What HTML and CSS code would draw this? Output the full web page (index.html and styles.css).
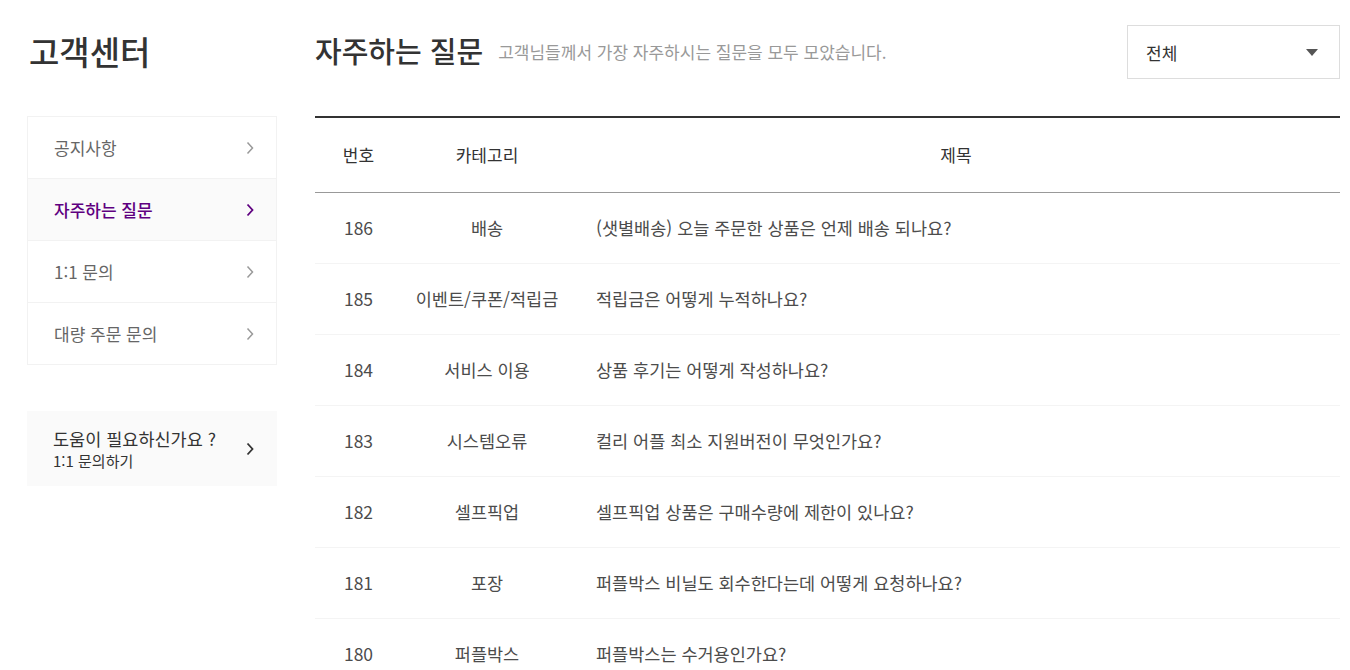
FILE: index.html
```html
<!DOCTYPE html>
<html lang="ko">
<head>
<meta charset="utf-8">
<title>자주하는 질문</title>
<link rel="stylesheet" href="styles.css">
</head>
<body>
<div class="page">
  <aside class="side">
    <h2 class="side-title">고객센터</h2>
    <ul class="menu">
      <li class="menu-item"><span>공지사항</span><svg class="chev" viewBox="0 0 8 14"><path d="M1.5 1.5 L6.5 7 L1.5 12.5"/></svg></li>
      <li class="menu-item active"><span>자주하는 질문</span><svg class="chev" viewBox="0 0 8 14"><path d="M1.5 1.5 L6.5 7 L1.5 12.5"/></svg></li>
      <li class="menu-item"><span>1:1 문의</span><svg class="chev" viewBox="0 0 8 14"><path d="M1.5 1.5 L6.5 7 L1.5 12.5"/></svg></li>
      <li class="menu-item"><span>대량 주문 문의</span><svg class="chev" viewBox="0 0 8 14"><path d="M1.5 1.5 L6.5 7 L1.5 12.5"/></svg></li>
    </ul>
    <div class="help">
      <div class="help-text">
        <div class="help-title">도움이 필요하신가요 ?</div>
        <div class="help-sub">1:1 문의하기</div>
      </div>
      <svg class="chev dark" viewBox="0 0 8 14"><path d="M1.5 1.5 L6.5 7 L1.5 12.5"/></svg>
    </div>
  </aside>
  <main class="content">
    <div class="head">
      <div class="head-titles">
        <h2 class="title">자주하는 질문</h2>
        <span class="subtitle">고객님들께서 가장 자주하시는 질문을 모두 모았습니다.</span>
      </div>
      <div class="select">
        <span>전체</span>
        <svg class="caret" viewBox="0 0 12 7"><path d="M0 0 H12 L6 7 Z"/></svg>
      </div>
    </div>
    <table class="faq">
      <thead>
        <tr><th class="c-no">번호</th><th class="c-cat">카테고리</th><th class="c-title-h">제목</th></tr>
      </thead>
      <tbody>
        <tr><td class="c-no">186</td><td class="c-cat">배송</td><td class="c-title">(샛별배송) 오늘 주문한 상품은 언제 배송 되나요?</td></tr>
        <tr><td class="c-no">185</td><td class="c-cat">이벤트/쿠폰/적립금</td><td class="c-title">적립금은 어떻게 누적하나요?</td></tr>
        <tr><td class="c-no">184</td><td class="c-cat">서비스 이용</td><td class="c-title">상품 후기는 어떻게 작성하나요?</td></tr>
        <tr><td class="c-no">183</td><td class="c-cat">시스템오류</td><td class="c-title">컬리 어플 최소 지원버전이 무엇인가요?</td></tr>
        <tr><td class="c-no">182</td><td class="c-cat">셀프픽업</td><td class="c-title">셀프픽업 상품은 구매수량에 제한이 있나요?</td></tr>
        <tr><td class="c-no">181</td><td class="c-cat">포장</td><td class="c-title">퍼플박스 비닐도 회수한다는데 어떻게 요청하나요?</td></tr>
        <tr><td class="c-no">180</td><td class="c-cat">퍼플박스</td><td class="c-title">퍼플박스는 수거용인가요?</td></tr>
      </tbody>
    </table>
  </main>
</div>
</body>
</html>
```

FILE: styles.css
```css
* { box-sizing: border-box; }
html, body { margin: 0; padding: 0; background: #fff; }
body {
  font-family: "Noto Sans CJK KR", "Noto Sans", sans-serif;
  color: #333;
  overflow: hidden;
}
.page {
  display: flex;
  gap: 38px;
  padding: 0 10px 0 27px;
}
.side { width: 250px; flex: none; }
.side-title {
  margin: 0;
  height: 116px;
  padding: 27px 0 0 2px;
  font-size: 33px;
  font-weight: 500;
  line-height: 48px;
  color: #333;
}
.menu {
  list-style: none;
  margin: 0;
  padding: 0;
  border: 1px solid #f2f2f2;
}
.menu-item {
  height: 62px;
  display: flex;
  align-items: center;
  justify-content: space-between;
  padding: 0 22px 0 26px;
  font-size: 17px;
  color: #666;
  border-top: 1px solid #f2f2f2;
}
.menu-item:first-child { border-top: 0; height: 61px; }
.menu-item.active {
  background: #fafafa;
  color: #5f0080;
  font-weight: 500;
}
.chev {
  width: 8px;
  height: 14px;
  fill: none;
  stroke: #999;
  stroke-width: 1.5;
}
.active .chev { stroke: #5f0080; stroke-width: 1.8; }
.chev.dark { stroke: #333; stroke-width: 1.8; }
.help {
  margin-top: 46px;
  height: 75px;
  background: #fafafa;
  display: flex;
  align-items: center;
  justify-content: space-between;
  padding: 0 23px 0 26px;
}
.help-title {
  font-size: 17.5px;
  font-weight: 400;
  color: #333;
  line-height: 25px;
}
.help-sub {
  font-size: 15px;
  color: #333;
  line-height: 20px;
}
.content { flex: 1; min-width: 0; }
.head {
  display: flex;
  justify-content: space-between;
  align-items: flex-start;
  padding-top: 25px;
  height: 116px;
}
.head-titles {
  display: flex;
  align-items: center;
  gap: 15px;
  padding-top: 4px;
}
.title {
  margin: 0;
  font-size: 29px;
  font-weight: 500;
  line-height: 42px;
  color: #333;
}
.subtitle {
  font-size: 17px;
  color: #999;
  padding-top: 3px;
}
.select {
  width: 213px;
  height: 54px;
  border: 1px solid #ddd;
  display: flex;
  align-items: center;
  justify-content: space-between;
  padding: 0 21px 0 18px;
  font-size: 17px;
  color: #333;
}
.caret { width: 12px; height: 7px; fill: #555; }
.faq {
  width: 100%;
  border-collapse: collapse;
  border-top: 2px solid #333;
  table-layout: fixed;
  font-size: 17.5px;
  color: #4c4c4c;
}
.faq th {
  height: 75px;
  font-weight: 400;
  font-size: 17px;
  color: #333;
  border-bottom: 1px solid #999;
  padding: 0;
}
.faq td {
  height: 71px;
  border-bottom: 1px solid #f4f4f4;
  padding: 0;
  color: #4c4c4c;
}
.c-no { width: 87px; text-align: center; }
.c-cat { width: 170px; text-align: center; }
.c-title-h { text-align: center; }
.c-title { text-align: left; padding-left: 24px !important; }
```
